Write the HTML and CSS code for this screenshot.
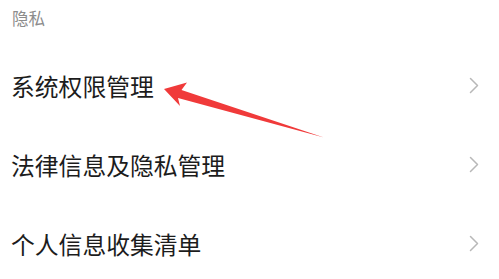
FILE: index.html
```html
<!DOCTYPE html>
<html lang="zh-CN">
<head>
<meta charset="utf-8">
<link rel="stylesheet" href="styles.css">
</head>
<body>
<div class="page">
  <div class="section-title">隐私</div>
  <div class="list">
    <div class="row"><span class="label">系统权限管理</span><svg class="chev" viewBox="0 0 11 17" width="11" height="17"><path d="M1.5 1.5 L8.5 8.5 L1.5 15.5" /></svg></div>
    <div class="row"><span class="label">法律信息及隐私管理</span><svg class="chev" viewBox="0 0 11 17" width="11" height="17"><path d="M1.5 1.5 L8.5 8.5 L1.5 15.5" /></svg></div>
    <div class="row"><span class="label">个人信息收集清单</span><svg class="chev" viewBox="0 0 11 17" width="11" height="17"><path d="M1.5 1.5 L8.5 8.5 L1.5 15.5" /></svg></div>
  </div>
  <svg class="arrow" viewBox="0 0 499 279" width="499" height="279">
    <polygon points="164,89 187,82.5 181.5,90 324,137.5 178,98 180,106" />
  </svg>
</div>
</body>
</html>
```

FILE: styles.css
```css
html, body {
  margin: 0;
  padding: 0;
  background: #ffffff;
}
.page {
  position: relative;
  width: 499px;
  height: 279px;
  overflow: hidden;
  font-family: "Noto Sans CJK SC", "Noto Sans", sans-serif;
}
.section-title {
  height: 46px;
  line-height: 36px;
  padding-left: 12px;
  font-size: 16.5px;
  color: #8c8c8c;
}
.list {
  display: flex;
  flex-direction: column;
}
.row {
  height: 79px;
  display: flex;
  align-items: center;
  justify-content: space-between;
  padding: 0 19px 0 11px;
}
.label {
  font-size: 23.8px;
  color: #1c1c1c;
}
.chev path {
  fill: none;
  stroke: #b8b8b8;
  stroke-width: 1.5;
  stroke-linecap: round;
  stroke-linejoin: round;
}
.arrow {
  position: absolute;
  left: 0;
  top: 0;
  pointer-events: none;
}
.arrow polygon {
  fill: #f03a3a;
}
```
